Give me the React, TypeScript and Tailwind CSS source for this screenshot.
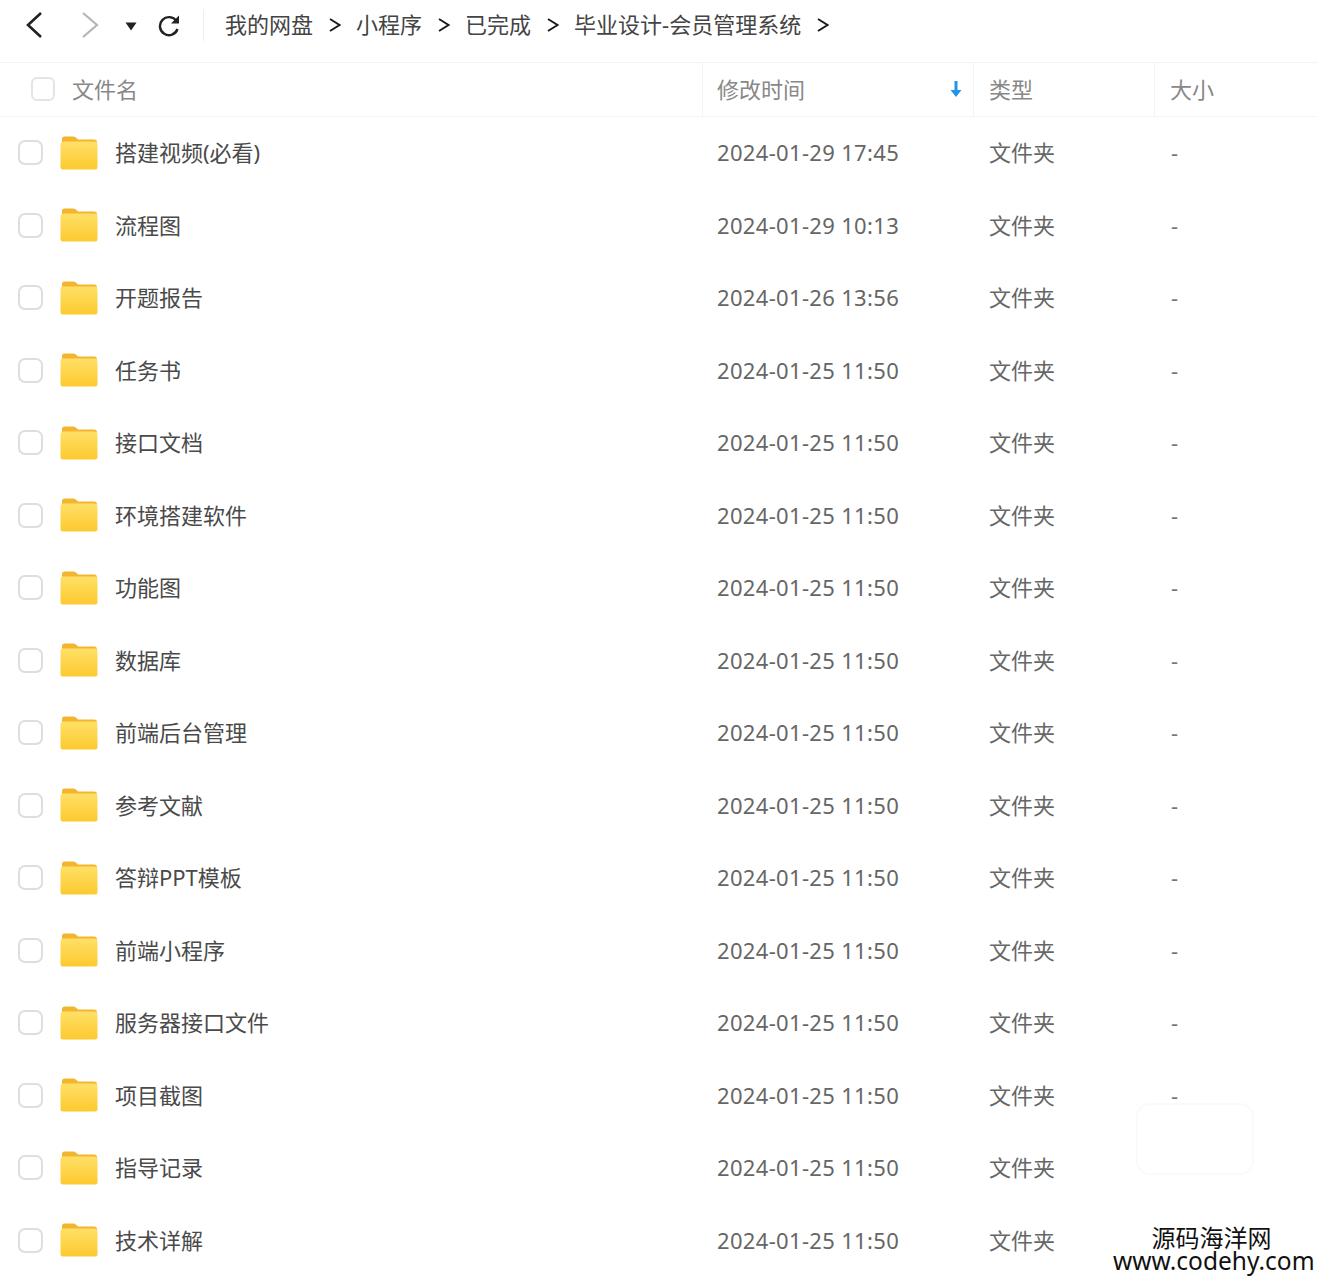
const rows: [string, string, boolean][] = [
  ["搭建视频(必看)", "2024-01-29 17:45", true],
  ["流程图", "2024-01-29 10:13", true],
  ["开题报告", "2024-01-26 13:56", true],
  ["任务书", "2024-01-25 11:50", true],
  ["接口文档", "2024-01-25 11:50", true],
  ["环境搭建软件", "2024-01-25 11:50", true],
  ["功能图", "2024-01-25 11:50", true],
  ["数据库", "2024-01-25 11:50", true],
  ["前端后台管理", "2024-01-25 11:50", true],
  ["参考文献", "2024-01-25 11:50", true],
  ["答辩PPT模板", "2024-01-25 11:50", true],
  ["前端小程序", "2024-01-25 11:50", true],
  ["服务器接口文件", "2024-01-25 11:50", true],
  ["项目截图", "2024-01-25 11:50", true],
  ["指导记录", "2024-01-25 11:50", false],
  ["技术详解", "2024-01-25 11:50", false],
];

const crumbs = ["我的网盘", "小程序", "已完成", "毕业设计-会员管理系统"];

function Folder() {
  return (
    <svg width="38" height="34" viewBox="0 0 38 34" className="shrink-0">
      <defs>
        <linearGradient id="folderBody" x1="0" y1="0" x2="0" y2="1">
          <stop offset="0" stopColor="#ffe067" />
          <stop offset="1" stopColor="#fdc92f" />
        </linearGradient>
      </defs>
      <path d="M2 7V3a2.5 2.5 0 0 1 2.5-2.5h8.5c1.5 0 2.5.6 3.5 1.6l1.5 1.4h16A3 3 0 0 1 37 6.500V10H2z" fill="#f3b52e" />
      <path d="M0.500 8.500a3 3 0 0 1 3-3h31a3 3 0 0 1 3 3V31a2.500 2.500 0 0 1-2.500 2.500H3a2.500 2.500 0 0 1-2.500-2.500z" fill="url(#folderBody)" />
    </svg>
  );
}

function Chevron() {
  return (
    <svg width="14" height="16" viewBox="0 0 14 16" className="shrink-0">
      <path d="M2 2l9.500 6L2 14" fill="none" stroke="#1c1c1c" strokeWidth="2" />
    </svg>
  );
}

export default function App() {
  return (
    <div
      className="relative w-[1318px] h-[1280px] overflow-hidden bg-white text-[#555555]"
      style={{ fontFamily: '"Noto Sans", "Noto Sans CJK SC", sans-serif' }}
    >
      <div className="flex items-center h-[62.5px] pb-[11px] border-b border-[#f3f3f3]">
        <svg width="20" height="28" viewBox="0 0 20 28" className="ml-[24px]">
          <path d="M17 2L4 14l13 12" fill="none" stroke="#222222" strokeWidth="2.600" />
        </svg>
        <svg width="20" height="28" viewBox="0 0 20 28" className="ml-[36px]">
          <path d="M3 2l14 12L3 26" fill="none" stroke="#b5b5b5" strokeWidth="2.200" />
        </svg>
        <svg width="12" height="9" viewBox="0 0 12 9" className="ml-[25px] mt-[2px]">
          <path d="M0.500 0.500h11L6 8.500z" fill="#222222" />
        </svg>
        <svg width="24" height="24" viewBox="0 0 24 24" className="ml-[20px]">
          <path d="M19.500 8.200A9 9 0 1 0 20.500 16" fill="none" stroke="#222222" strokeWidth="2.400" />
          <path d="M22 2.500V10.500H14z" fill="#222222" />
        </svg>
        <div className="w-px h-[32px] bg-[#eeeeee] ml-[22px]" />
        <div className="flex items-center ml-[21px] gap-[14px]">
          {crumbs.map((c) => (
            <div key={c} className="flex items-center gap-[15px]">
              <span className="text-[22px] leading-[30px] mt-[-2px] text-[#444444] whitespace-nowrap">{c}</span>
              <Chevron />
            </div>
          ))}
        </div>
      </div>

      <div className="flex h-[54px] items-center border-b border-[#f5f5f5] text-[22px] text-[#888888]">
        <div className="w-[702px] flex items-center pl-[31px]">
          <div className="w-[24px] h-[24px] rounded-[6px] border-2 border-[#e4e4e4]" />
          <span className="ml-[17px]">文件名</span>
        </div>
        <div className="w-[272px] h-full flex items-center justify-between pl-[14px] pr-[11px] border-l border-r border-[#f3f3f3]">
          <span>修改时间</span>
          <svg width="12" height="18" viewBox="0 0 12 18">
            <path d="M4.500 1h3v9H11.500L6 17 0.500 10H4.500z" fill="#2196e8" />
          </svg>
        </div>
        <div className="w-[181px] h-full flex items-center pl-[15px] border-r border-[#f3f3f3]">类型</div>
        <div className="flex-1 h-full flex items-center pl-[15px]">大小</div>
      </div>

      <div>
        {rows.map(([name, time, dash]) => (
          <div key={name} className="flex items-center h-[72.5px] text-[22px]">
            <div className="w-[702px] flex items-center pl-[18px]">
              <div className="w-[25px] h-[25px] rounded-[7px] border-2 border-[#dedede]" />
              <div className="ml-[17px]">
                <Folder />
              </div>
              <span className="ml-[17px] text-[#4a4a4a] whitespace-nowrap">{name}</span>
            </div>
            <div className="w-[272px] pl-[15px] text-[#666666] tracking-[0.33px] whitespace-nowrap">{time}</div>
            <div className="w-[181px] pl-[15px] text-[#666666]">文件夹</div>
            {dash && <div className="flex-1 pl-[16px] text-[#777777]">-</div>}
          </div>
        ))}
      </div>

      <div className="absolute left-[1136px] top-[1103px] w-[118px] h-[72px] rounded-[14px] border-2 border-[#fafafa]" />
      <div
        className="absolute left-[1109px] top-[1225px] w-[205px] text-center text-[#111111] leading-[24px]"
        style={{ fontFamily: '"Noto Sans CJK SC", "Noto Sans", sans-serif' }}
      >
        <div className="text-[24px]">源码海洋网</div>
        <div className="text-[24.500px] whitespace-nowrap ml-[4px]" style={{ fontFamily: '"Noto Sans", sans-serif' }}>www.codehy.com</div>
      </div>
    </div>
  );
}
